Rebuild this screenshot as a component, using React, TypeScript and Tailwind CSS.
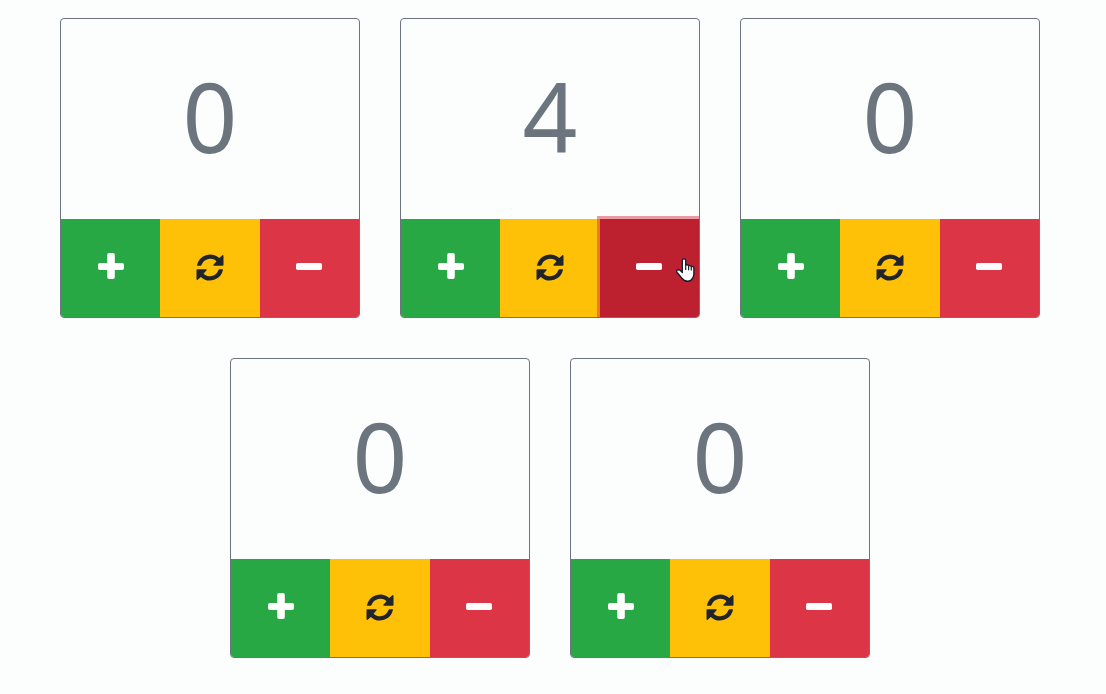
import { useState } from "react";

function PlusIcon() {
  return (
    <svg viewBox="0 0 26 26" className="size-[26px]" fill="currentColor" aria-hidden="true">
      <rect x="9.200" y="0" width="7.600" height="26" rx="1.900" />
      <rect x="0" y="10" width="26" height="7" rx="1.900" />
    </svg>
  );
}

function MinusIcon() {
  return (
    <svg viewBox="0 0 26 26" className="size-[26px]" fill="currentColor" aria-hidden="true">
      <rect x="0" y="10" width="26" height="7" rx="1.700" />
    </svg>
  );
}

const ARROW =
  "M1 11.300A13.400 13.400 0 0 1 23.200 4L26.300 1.300Q27.500.7 27.500 1.900V11Q27.500 11.800 26.700 11.800H17.900Q16.800 11.600 17.600 10.600L20.500 7.300A9 9 0 0 0 5.900 10.300L5.300 11.300Q5 11.800 4.500 11.800H1.400Q.9 11.800 1 11.300Z";

function RefreshIcon() {
  return (
    <svg viewBox="0 0 28 27" className="h-[27px] w-7" fill="currentColor" aria-hidden="true">
      <path d={ARROW} />
      <path d={ARROW} transform="rotate(180 14 13.5)" />
    </svg>
  );
}

function HandCursor() {
  return (
    <svg
      viewBox="0 0 19 25"
      className="pointer-events-none absolute top-[39px] right-1 h-[25px] w-[19px]"
      aria-hidden="true"
    >
      <path
        d="M6.300 14.500V2.600C6.300 1.400 7.100.8 8 .8s1.700.6 1.700 1.800v4.600c.5-.7 2.600-.6 2.900.6.600-.6 2.400-.3 2.700.9.800-.6 2.600-.2 2.600 1.400v6c0 1.800-.5 2.800-1.200 4-.8 1.500-2.400 3.200-5.200 3.200-2.600 0-4.200-1-5.400-2.800L1.100 14.500c-.9-1.400-.4-2.400.6-2.700 1.200-.3 2.200.2 2.900 1z"
        fill="#fff"
        stroke="#1b1d30"
        strokeWidth="1.400"
        strokeLinejoin="round"
      />
      <path d="M9.700 7v5M12.600 8v4.200M15.300 9v3.500" stroke="#1b1d30" strokeWidth="1.200" fill="none" />
    </svg>
  );
}

function Counter({ initial, active = false }: { initial: number; active?: boolean }) {
  const [count, setCount] = useState(initial);
  const base = "relative flex cursor-pointer items-center justify-center";
  return (
    <section className="grid size-75 grid-rows-[200px_1fr] overflow-hidden rounded-sm border border-[#6c757d]">
      <output className="flex items-center justify-center pb-1.5 text-8xl text-[#6c757d]">{count}</output>
      <div className="grid grid-cols-3">
        <button
          type="button"
          aria-label="Increase"
          onClick={() => setCount(count + 1)}
          className={`${base} bg-[#28a745] pb-1 text-white`}
        >
          <PlusIcon />
        </button>
        <button
          type="button"
          aria-label="Reset"
          onClick={() => setCount(0)}
          className={`${base} bg-[#ffc107] pb-px text-[#212529]`}
        >
          <RefreshIcon />
        </button>
        <button
          type="button"
          aria-label="Decrease"
          onClick={() => setCount(count - 1)}
          className={`${base} pb-1 text-white ${
            active ? "bg-[#bd2130] shadow-[0_0_0_3px_rgba(220,53,69,0.5)]" : "bg-[#dc3545]"
          }`}
        >
          <MinusIcon />
          {active && <HandCursor />}
        </button>
      </div>
    </section>
  );
}

const counters = [0, 4, 0, 0, 0];

export default function App() {
  return (
    <main className="flex min-h-screen flex-wrap content-start justify-center gap-10 bg-[#fcfefd] pt-[18px] pr-1.5 font-['Noto_Sans','Open_Sans',sans-serif]">
      {counters.map((value, index) => (
        <Counter key={index} initial={value} active={index === 1} />
      ))}
    </main>
  );
}
